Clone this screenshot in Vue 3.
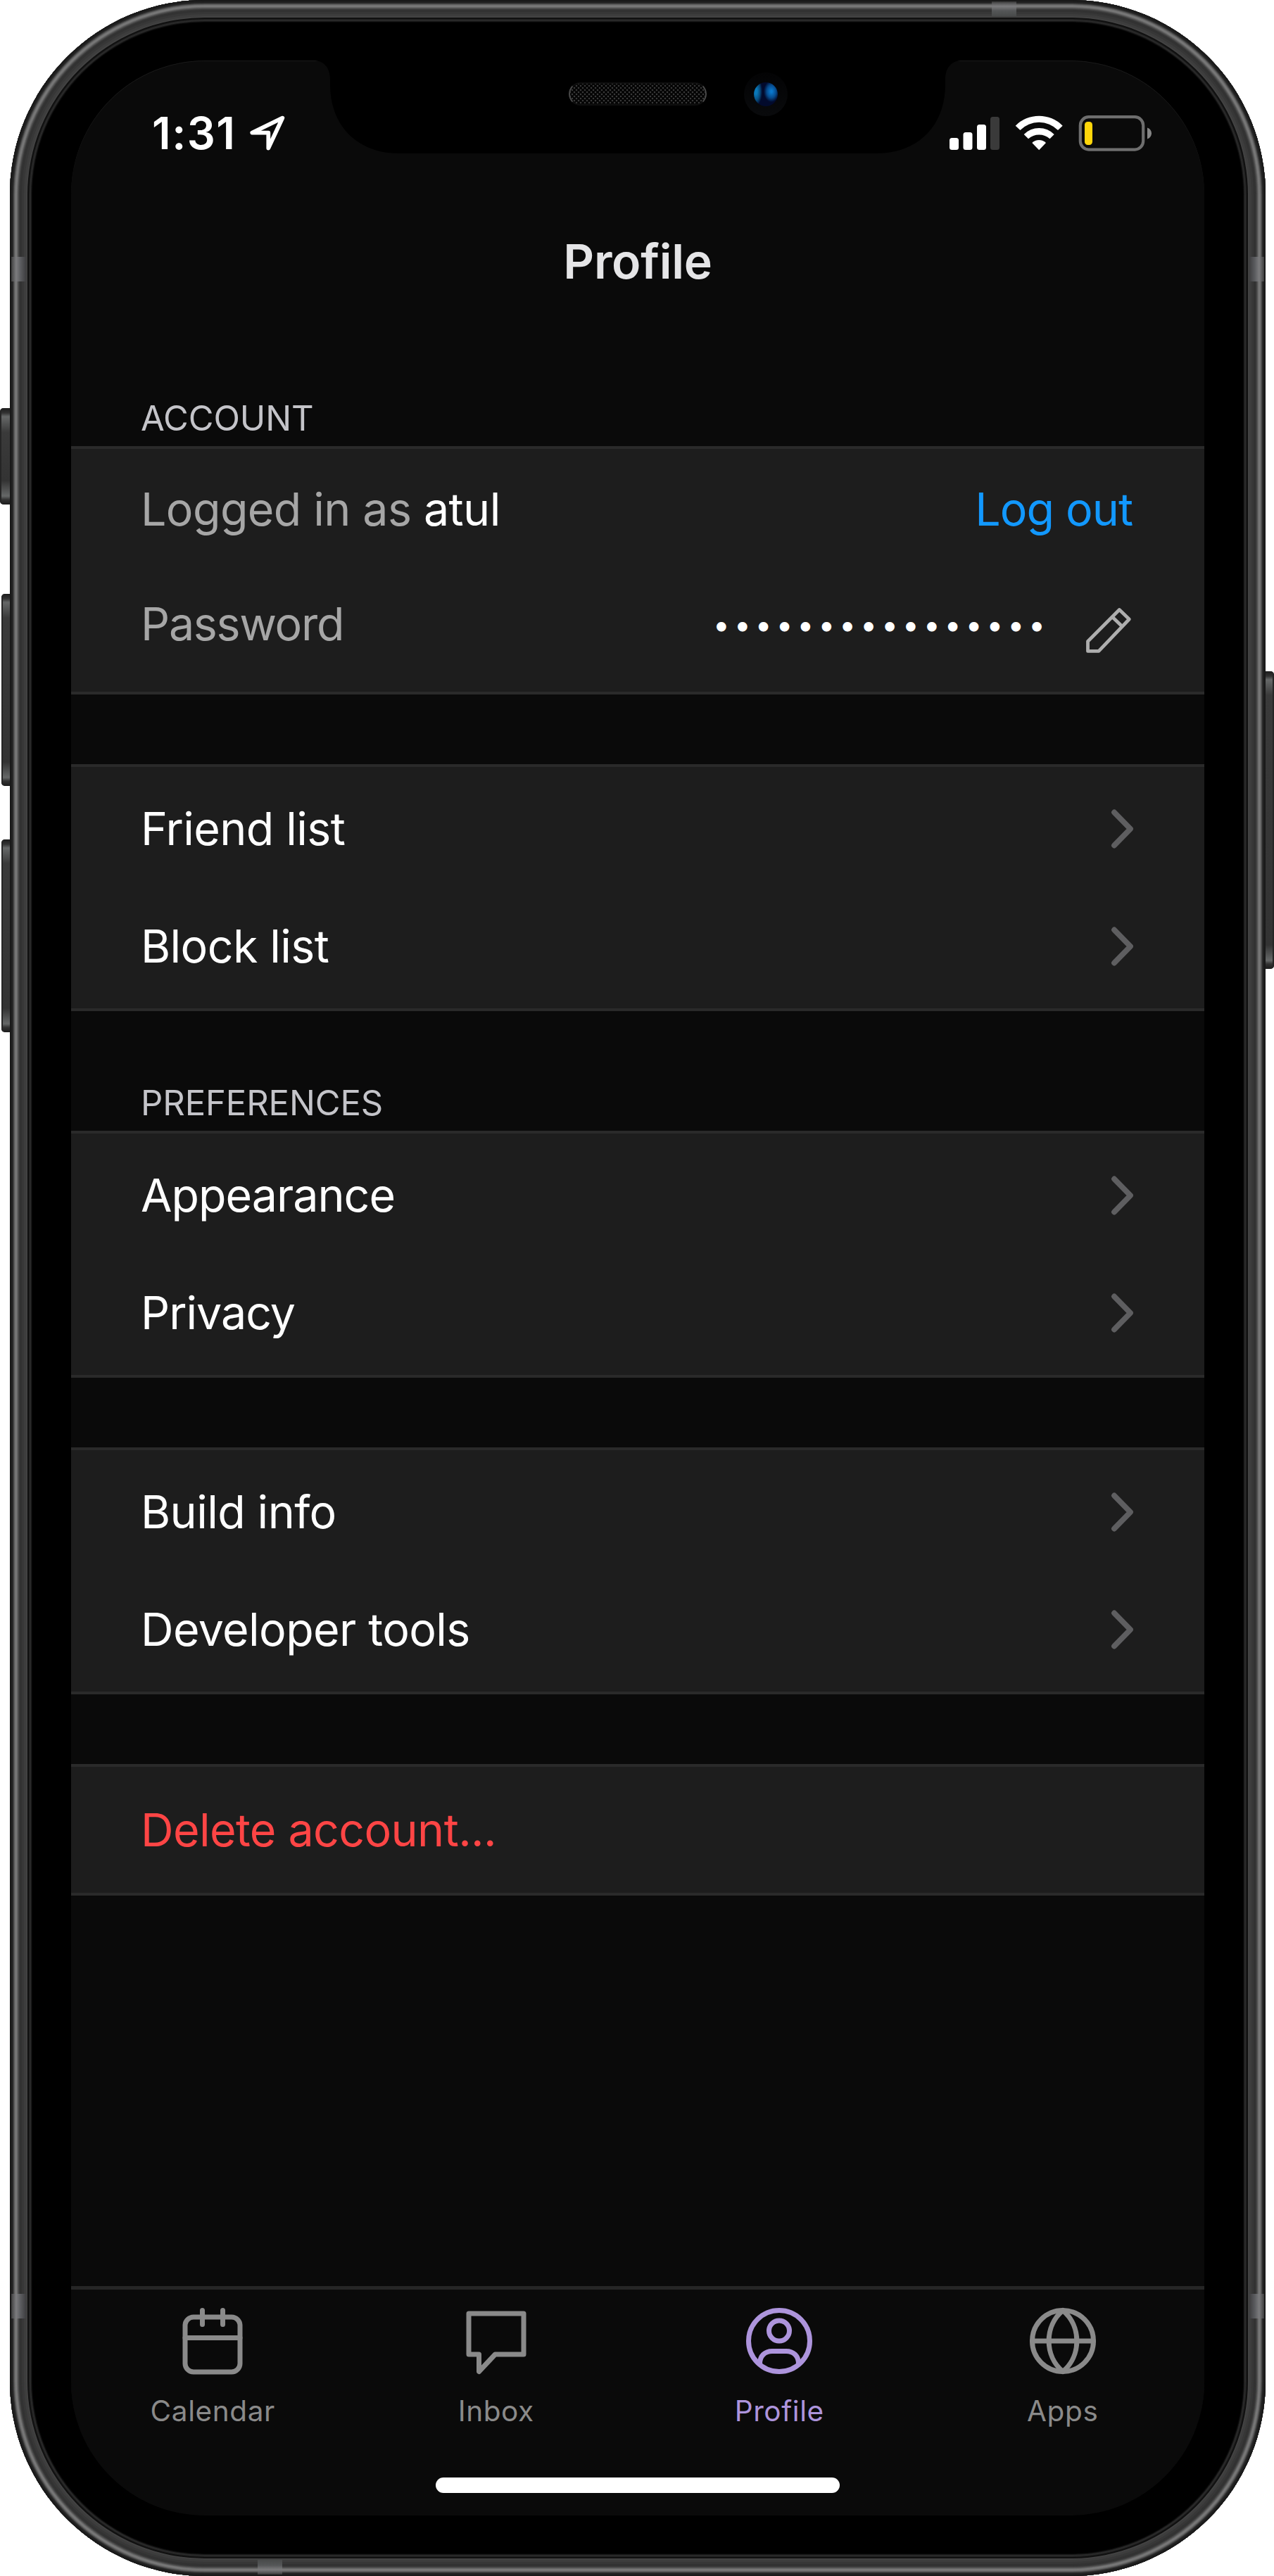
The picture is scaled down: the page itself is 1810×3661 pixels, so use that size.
<script setup>
const groups = [
  { title: 'Account', account: true, rows: [] },
  { rows: ['Friend list', 'Block list'] },
  { title: 'Preferences', tight: true, rows: ['Appearance', 'Privacy'] },
  { rows: ['Build info', 'Developer tools'] },
]
const tabs = [
  { name: 'Calendar' },
  { name: 'Inbox' },
  { name: 'Profile', active: true },
  { name: 'Apps' },
]
const password = '•'.repeat(16)
</script>

<template>
  <div class="stage">
    <i class="key mute"></i>
    <i class="key vol-up"></i>
    <i class="key vol-down"></i>
    <i class="key power"></i>
    <div class="phone">
      <i class="band side left upper"></i>
      <i class="band side right upper"></i>
      <i class="band side left lower"></i>
      <i class="band side right lower"></i>
      <i class="band flat top"></i>
      <i class="band flat bottom"></i>

      <div class="screen">
        <div class="notch">
          <svg width="922" height="133" viewBox="0 0 922 133">
            <path d="M0 0H922C907 0 898 10 898 27V34C898 94 858 132 800 132H122C64 132 24 94 24 34V27C24 10 15 0 0 0Z" fill="#000" />
          </svg>
          <i class="speaker"></i>
          <i class="camera"><b></b></i>
        </div>

        <header class="status">
          <div class="clock">
            <span>1:31</span>
            <svg width="52" height="52" viewBox="354 164 52 52">
              <path d="M401.300 168.700L358.300 189.700H381.300V211.500Z" fill="none" stroke="#fff" stroke-width="5.800" stroke-linejoin="round" />
            </svg>
          </div>
          <svg class="indicators" width="290" height="54" viewBox="1348 161 290 54">
            <g fill="#fff">
              <rect x="1349" y="195" width="13" height="17" rx="3.500" />
              <rect x="1368.500" y="187" width="13" height="25" rx="3.500" />
              <rect x="1388" y="176" width="13" height="36" rx="3.500" />
              <rect x="1407" y="165" width="13" height="47" rx="3.500" fill="#3a3a3a" />
              <path d="M1442.700 177.700A47 47 0 0 1 1509.700 177.700L1503 184A37.500 37.500 0 0 0 1449.400 184Z" />
              <path d="M1454.700 190A30 30 0 0 1 1497.700 190L1491.500 196.300A23 23 0 0 0 1461 196.300Z" />
              <path d="M1466.300 202A14 14 0 0 1 1486 202L1476.200 212.300Z" />
            </g>
            <rect x="1534.800" y="165.200" width="89.400" height="46.400" rx="12" fill="none" stroke="#6e6e6e" stroke-width="4.200" />
            <rect x="1541" y="172" width="11" height="33" rx="4.500" fill="#ffd60a" />
            <path d="M1630 180.500C1638 183 1638 194 1630 196.500Z" fill="#868686" />
          </svg>
        </header>

        <h1>Profile</h1>

        <main>
          <template v-for="(g, i) in groups" :key="i">
            <h2 v-if="g.title" :class="{ first: g.account }">{{ g.title }}</h2>
            <section :class="{ spaced: !g.title, account: g.account, tight: g.tight }">
              <template v-if="g.account">
                <div class="row">
                  <span class="muted">Logged in as <strong>atul</strong></span>
                  <a class="link">Log out</a>
                </div>
                <div class="row">
                  <span class="muted pw">Password</span>
                  <div class="secret">
                    <span class="dots">{{ password }}</span>
                    <svg width="68" height="68" viewBox="1540 861 68 68">
                      <path d="M1544.500 911.500L1589.300 866.500L1603.300 880L1560 925.400H1544.500ZM1579.500 877L1593.500 890.500" fill="none" stroke="#aeaeae" stroke-width="4.800" stroke-linejoin="round" />
                    </svg>
                  </div>
                </div>
              </template>
              <div v-for="r in g.rows" :key="r" class="row">
                <span>{{ r }}</span>
                <svg width="34" height="58" viewBox="0 0 34 58">
                  <path d="M6 5.500L29 29L6 52.500" fill="none" stroke="#5e5e60" stroke-width="7.800" stroke-linecap="round" stroke-linejoin="round" />
                </svg>
              </div>
            </section>
          </template>
          <section class="spaced">
            <div class="row danger"><span>Delete account...</span></div>
          </section>
        </main>

        <nav>
          <div v-for="t in tabs" :key="t.name" class="tab" :class="{ active: t.active }">
            <svg width="96" height="96" viewBox="0 0 96 96" fill="none" stroke="currentColor" stroke-width="7" stroke-linecap="round" stroke-linejoin="round">
              <template v-if="t.name === 'Calendar'">
                <rect x="9" y="14" width="78" height="78" rx="12" />
                <path d="M9 43.500H87M33.500 4.500V24.500M62.500 4.500V24.500" />
              </template>
              <path v-else-if="t.name === 'Inbox'" d="M9 9H87V67H46.500L23.500 91.500V67H9Z" />
              <template v-else-if="t.name === 'Profile'">
                <circle cx="48" cy="48" r="43.500" />
                <circle cx="48" cy="33.500" r="14.500" />
                <path d="M20.500 80C20.500 69 28 62.500 38 62.500H58C68 62.500 75.500 69 75.500 80" />
              </template>
              <template v-else>
                <circle cx="48" cy="48" r="43.500" />
                <path d="M4.500 48H91.500M48 4.500C21.500 27 21.500 69 48 91.500C74.500 69 74.500 27 48 4.500Z" />
              </template>
            </svg>
            <span>{{ t.name }}</span>
          </div>
        </nav>
        <div class="home"></div>
      </div>
    </div>
  </div>
</template>

<style>
body {
  background: #fff;
}
</style>

<style scoped>
.stage {
  position: relative;
  box-sizing: border-box;
  width: 1810px;
  height: 3661px;
  padding-left: 14px;
  overflow: hidden;
  font-family: Inter, "Liberation Sans", sans-serif;
  color: #fff;
}

/* hardware keys protruding behind the frame */
.key {
  position: absolute;
  left: 2px;
  width: 20px;
  border-radius: 5px;
  background: linear-gradient(#1c1c1c 0, #333 7px, #666868 12px, #3a3a3a 34px, #333 calc(100% - 34px), #666868 calc(100% - 12px), #333 calc(100% - 7px), #1c1c1c);
  box-shadow: inset 2px 0 0 #252525;
}
.mute { left: 0; top: 580px; height: 137px; }
.vol-up { top: 844px; height: 273px; }
.vol-down { top: 1193px; height: 274px; }
.power { left: 1790px; top: 954px; height: 423px; box-shadow: inset -2px 0 0 #252525; }

.phone {
  position: relative;
  box-sizing: border-box;
  width: 1784px;
  height: 3661px;
  padding: 86px 87px;
  border-radius: 277px;
  background: #000;
  box-shadow:
    inset 0 0 0 2px #191919, inset 0 0 0 4px #212121, inset 0 0 0 5px #303030,
    inset 0 0 0 6px #474747, inset 0 0 0 7px #5e5e5e, inset 0 0 0 8px #707070,
    inset 0 0 0 10px #777, inset 0 0 0 11px #686868, inset 0 0 0 12px #565656,
    inset 0 0 0 13px #464646, inset 0 0 0 14px #3a3a3a, inset 0 0 0 17px #323232,
    inset 0 0 0 20px #373737, inset 0 0 0 23px #3d3d3d, inset 0 0 0 25px #424242,
    inset 0 0 0 27px #101010, inset 0 0 0 28px #1f1f1f, inset 0 0 0 30px #292929,
    inset 0 0 0 31px #181818, inset 0 0 0 32px #080808;
}

.band { position: absolute; }
.side { width: 21px; height: 35px; }
.flat { width: 35px; height: 21px; }
.left { left: 2px; background: linear-gradient(90deg, #3c3c3c 0, #59595a 3px, #7c7c7e 7px, #5c5d60 13px, #3e3e40 21px); }
.right { right: 2px; background: linear-gradient(270deg, #3c3c3c 0, #59595a 3px, #7c7c7e 7px, #5c5d60 13px, #3e3e40 21px); }
.upper { top: 365px; }
.lower { top: 3260px; }
.top { top: 2px; left: 1395px; background: linear-gradient(#333 0, #59595a 3px, #7c7c7e 7px, #555758 13px, #484a4a 21px); }
.bottom { bottom: 2px; left: 352px; background: linear-gradient(0deg, #333 0, #59595a 3px, #7c7c7e 7px, #555758 13px, #484a4a 21px); }

.screen {
  position: relative;
  display: flex;
  flex-direction: column;
  width: 1610px;
  height: 3489px;
  border-radius: 190px;
  overflow: hidden;
  background: #0a0a0a;
  box-shadow: inset 0 1px 0 #1a1a1a;
}

.notch {
  position: absolute;
  top: 0;
  left: 344px;
  width: 922px;
  height: 133px;
}
.notch svg { display: block; }
.speaker {
  position: absolute;
  left: 363px;
  top: 31px;
  width: 196px;
  height: 33px;
  box-sizing: border-box;
  border-radius: 17px;
  border: 2px solid #0e0e0e;
  border-left-color: #484848;
  border-right-color: #484848;
  background:
    radial-gradient(circle, #383838 0.9px, transparent 1.7px) 0 0 / 6px 6px,
    radial-gradient(circle, #383838 0.9px, transparent 1.7px) 3px 3px / 6px 6px,
    #030303;
}
.camera {
  position: absolute;
  left: 612px;
  top: 17px;
  display: flex;
  align-items: center;
  justify-content: center;
  width: 62px;
  height: 62px;
  border-radius: 50%;
  background: linear-gradient(#030304, #090a0c);
}
.camera b {
  width: 34px;
  height: 34px;
  border-radius: 50%;
  background:
    radial-gradient(ellipse 9px 20px at 3px 13px, #0a78b8 20%, #07497a 65%, transparent 100%),
    radial-gradient(ellipse 11px 15px at 25px 13px, #0a78cc 10%, #064a8c 60%, transparent 100%),
    #020a2c;
}

.status {
  display: flex;
  flex: none;
  align-items: center;
  justify-content: space-between;
  box-sizing: border-box;
  height: 200px;
  padding: 5px 73px 0 115px;
}
.clock {
  display: flex;
  align-items: center;
}
.clock span {
  width: 138px;
  font-size: 63px;
  font-weight: 600;
  letter-spacing: 1.500px;
}

h1 {
  flex: none;
  margin: 0;
  height: 172px;
  line-height: 170px;
  text-align: center;
  font-size: 68px;
  font-weight: 600;
  letter-spacing: -0.300px;
  color: #e5e5e7;
}

main { flex: 1; }
h2 {
  box-sizing: border-box;
  height: 170px;
  margin: 0;
  padding: 106px 99px 0;
  line-height: 50px;
  font-size: 49px;
  font-weight: 400;
  letter-spacing: -0.100px;
  text-transform: uppercase;
  color: #c4c4c9;
}
h2.first {
  height: 176px;
  padding-top: 112px;
}
section {
  padding: 4.500px 0;
  border-top: 4px solid #2a2a2a;
  border-bottom: 4px solid #2a2a2a;
  background: #1d1d1d;
}
section.spaced { margin-top: 99px; }
.row {
  display: flex;
  align-items: center;
  justify-content: space-between;
  box-sizing: border-box;
  height: 167px;
  padding: 0 100px 0 99px;
  font-size: 64.500px;
  letter-spacing: -0.600px;
  white-space: nowrap;
}
section.account { padding-bottom: 14.500px; }
.account .row { height: 163px; padding-right: 102px; }
.tight .row { letter-spacing: -1px; }
.muted { color: #a6a6a6; }
.muted.pw { letter-spacing: -1.300px; }
.muted strong { font-weight: 400; color: #fff; }
.link { color: #1298ff; letter-spacing: -1px; }
.secret { display: flex; align-items: center; }
.dots { font-size: 43px; letter-spacing: 5.700px; }
.secret svg { margin: 16px 0 0 50px; }
.row.danger { height: 170px; color: #ff4545; }

nav {
  display: flex;
  flex: none;
  height: 267px;
  border-top: 5px solid #262626;
}
.tab {
  flex: 1;
  display: flex;
  flex-direction: column;
  align-items: center;
  padding-top: 25px;
  color: #8a8a8a;
}
.tab span {
  margin-top: 27px;
  line-height: 50px;
  font-size: 40.500px;
  letter-spacing: 0.600px;
}
.tab.active { color: #ad94dc; }
.home {
  flex: none;
  align-self: center;
  width: 574px;
  height: 22px;
  margin-bottom: 32px;
  border-radius: 11px;
  background: #fff;
}
</style>
